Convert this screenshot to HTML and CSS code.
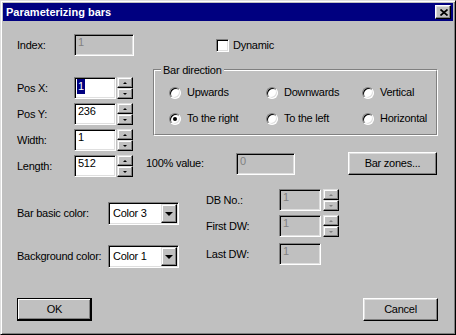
FILE: index.html
```html
<!DOCTYPE html>
<html lang="en">
<head>
	<meta charset="UTF-8">
	<title>Parameterizing bars</title>
	<link rel="stylesheet" href="styles.css">
</head>
<body>
	<div class="dlg">
		<div class="titlebar">
			<span class="title">Parameterizing bars</span>
			<span class="closebtn">
				<svg width="8" height="7" viewBox="0 0 8 7"><path d="M0.5 0.5 L7.5 6.5 M7.5 0.5 L0.5 6.5" stroke="#000" stroke-width="1.7" fill="none"/></svg>
			</span>
		</div>
		<div class="client">
			<!-- index / dynamic -->
			<div class="row_index">
				<span class="lbl w57">Index:</span>
				<div class="edit dis w60">1</div>
				<span class="check"></span>
				<span class="check_txt">Dynamic</span>
			</div>

			<div class="main">
				<div class="pos_col">
					<div class="spinrow">
						<span class="lbl w57">Pos X:</span>
						<div class="edit w42"><span class="sel">1</span></div>
						<div class="spin"><b class="up"></b><b class="dn"></b></div>
					</div>
					<div class="spinrow">
						<span class="lbl w57">Pos Y:</span>
						<div class="edit w42">236</div>
						<div class="spin"><b class="up"></b><b class="dn"></b></div>
					</div>
					<div class="spinrow">
						<span class="lbl w57">Width:</span>
						<div class="edit w42">1</div>
						<div class="spin"><b class="up"></b><b class="dn"></b></div>
					</div>
					<div class="spinrow">
						<span class="lbl w57">Length:</span>
						<div class="edit w42">512</div>
						<div class="spin"><b class="up"></b><b class="dn"></b></div>
					</div>
				</div>

				<div class="right_col">
					<div class="group">
						<div class="group_in">
							<span class="legend">Bar direction</span>
							<div class="radios">
								<span class="radio"><i></i>Upwards</span>
								<span class="radio"><i></i>Downwards</span>
								<span class="radio"><i></i>Vertical</span>
								<span class="radio"><i class="on"></i>To the right</span>
								<span class="radio"><i></i>To the left</span>
								<span class="radio"><i></i>Horizontal</span>
							</div>
						</div>
					</div>
					<div class="val_row">
						<span class="lbl w90">100% value:</span>
						<div class="edit dis w59">0</div>
						<div class="btn zones">Bar zones...</div>
					</div>
				</div>
			</div>

			<div class="lower">
				<div class="color_col">
					<div class="comborow">
						<span class="lbl w91">Bar basic color:</span>
						<div class="combo">Color 3<span class="drop"><b></b></span></div>
					</div>
					<div class="comborow second">
						<span class="lbl w91">Background color:</span>
						<div class="combo">Color 1<span class="drop"><b></b></span></div>
					</div>
				</div>
				<div class="db_col">
					<div class="spinrow">
						<span class="lbl w73">DB No.:</span>
						<div class="edit dis w42">1</div>
						<div class="spin dis"><b class="up"></b><b class="dn"></b></div>
					</div>
					<div class="spinrow">
						<span class="lbl w73">First DW:</span>
						<div class="edit dis w42">1</div>
						<div class="spin dis"><b class="up"></b><b class="dn"></b></div>
					</div>
					<div class="spinrow last">
						<span class="lbl w73">Last DW:</span>
						<div class="edit dis w42">1</div>
					</div>
				</div>
			</div>

			<div class="btnrow">
				<div class="btn def">OK</div>
				<div class="btn">Cancel</div>
			</div>
		</div>
	</div>
</body>
</html>
```

FILE: styles.css
```css
*{
	margin: 0;
	padding: 0;
	box-sizing: border-box;
}
body{
	background: #c0c0c0;
	font-family: "Liberation Sans", Arial, sans-serif;
	font-size: 11px;
	line-height: 13px;
	letter-spacing: -0.25px;
	color: #000;
}
.dlg{
	width: 456px;
	height: 335px;
	background: #c0c0c0;
	border: 1px solid;
	border-color: #dfdfdf #000 #000 #dfdfdf;
	box-shadow: inset 1px 1px 0 #fff, inset -1px -1px 0 #808080;
	padding: 2px;
}
.titlebar{
	height: 18px;
	background: #000080;
	display: flex;
	align-items: center;
	justify-content: space-between;
	padding: 0 2px 0 3px;
}
.title{
	color: #fff;
	font-weight: bold;
	line-height: 18px;
	letter-spacing: 0;
}
.closebtn{
	width: 16px;
	height: 14px;
	background: #c0c0c0;
	border: 1px solid;
	border-color: #fff #000 #000 #fff;
	box-shadow: inset -1px -1px 0 #808080, inset 1px 1px 0 #dfdfdf;
	display: flex;
	align-items: center;
	justify-content: center;
	padding-left: 1px;
}
.closebtn svg{
	display: block;
}
.client{
	padding: 13px 15px 0 14px;
}

/* labels */
.lbl{
	flex: none;
	white-space: nowrap;
}
.w57{ width: 57px; }
.w90{ width: 90px; }
.w91{ width: 91px; }
.w73{ width: 73px; }

/* sunken edit box */
.edit{
	flex: none;
	height: 22px;
	background: #fff;
	border: 1px solid;
	border-color: #808080 #fff #fff #808080;
	box-shadow: inset 1px 1px 0 #000, inset -1px -1px 0 #dfdfdf;
	padding: 1px 0 0 3px;
	white-space: nowrap;
}
.edit.dis{
	background: #c0c0c0;
	color: #808080;
}
.w60{ width: 60px; }
.w59{ width: 59px; }
.w42{ width: 42px; }
.sel{
	background: #000080;
	color: #fff;
	display: inline-block;
	padding: 0 1px;
	margin-left: -1px;
	height: 15px;
	line-height: 14px;
}

/* spin buttons */
.spin{
	flex: none;
	width: 16px;
	height: 22px;
	margin-left: 1px;
	display: flex;
	flex-direction: column;
}
.spin b{
	display: flex;
	align-items: center;
	justify-content: center;
	height: 11px;
	border: 1px solid;
	border-color: #dfdfdf #000 #000 #dfdfdf;
	box-shadow: inset -1px -1px 0 #808080, inset 1px 1px 0 #fff;
}
.spin b:after{
	content: "";
	border-left: 2px solid transparent;
	border-right: 2px solid transparent;
}
.spin b.up:after{
	border-bottom: 2px solid #000;
}
.spin b.dn:after{
	border-top: 2px solid #000;
}
.spin.dis b.up:after{
	border-bottom-color: #808080;
}
.spin.dis b.dn:after{
	border-top-color: #808080;
}

/* index row */
.row_index{
	display: flex;
	align-items: center;
	height: 22px;
}
.check{
	flex: none;
	width: 13px;
	height: 13px;
	margin-left: 82px;
	background: #fff;
	border: 1px solid;
	border-color: #808080 #fff #fff #808080;
	box-shadow: inset 1px 1px 0 #000, inset -1px -1px 0 #dfdfdf;
}
.check_txt{
	margin-left: 4px;
}

/* main part */
.main{
	display: flex;
	margin-top: 8px;
}
.pos_col{
	width: 116px;
	padding-top: 13px;
	display: flex;
	flex-direction: column;
	gap: 4px;
}
.spinrow{
	display: flex;
	align-items: center;
	height: 22px;
}
.right_col{
	margin-left: 13px;
}
.group{
	width: 285px;
	margin: 5px 0 0 7px;
	border: 1px solid;
	border-color: #808080 #fff #fff #808080;
}
.group_in{
	border: 1px solid;
	border-color: #fff #808080 #808080 #fff;
	padding: 0 0 9px 14px;
}
.legend{
	display: block;
	width: max-content;
	margin: -7px 0 0 -8px;
	padding: 0 2px;
	background: #c0c0c0;
}
.radios{
	display: grid;
	grid-template-columns: 97px 96px 1fr;
	row-gap: 13px;
	margin-top: 9px;
}
.radio{
	display: flex;
	align-items: center;
	height: 13px;
	white-space: nowrap;
}
.radio i{
	flex: none;
	width: 12px;
	height: 12px;
	margin-right: 6px;
	border-radius: 50%;
	background: #fff;
	border: 1px solid;
	border-color: #808080 #fff #fff #808080;
	box-shadow: inset 1px 1px 0 #000, inset -1px -1px 0 #dfdfdf;
	display: flex;
	align-items: center;
	justify-content: center;
}
.radio i.on:after{
	content: "";
	width: 4px;
	height: 4px;
	border-radius: 50%;
	background: #000;
}
.val_row{
	display: flex;
	align-items: center;
	margin-top: 16px;
	height: 23px;
}

/* buttons */
.btn{
	flex: none;
	width: 75px;
	height: 23px;
	line-height: 21px;
	text-align: center;
	border: 1px solid;
	border-color: #fff #000 #000 #fff;
	box-shadow: inset -1px -1px 0 #808080, inset 1px 1px 0 #dfdfdf;
}
.btn.def{
	border-color: #000;
	box-shadow: inset -1px -1px 0 #000, inset 1px 1px 0 #fff, inset -2px -2px 0 #808080;
}
.btn.zones{
	width: 89px;
	margin-left: 53px;
}

/* lower part */
.lower{
	display: flex;
	margin-top: 12px;
}
.color_col{
	width: 162px;
	padding-top: 13px;
}
.comborow{
	display: flex;
	align-items: center;
	height: 23px;
}
.comborow.second{
	margin-top: 20px;
}
.combo{
	flex: none;
	width: 71px;
	height: 23px;
	background: #fff;
	border: 1px solid;
	border-color: #808080 #fff #fff #808080;
	box-shadow: inset 1px 1px 0 #000, inset -1px -1px 0 #dfdfdf;
	padding: 1px 1px 1px 4px;
	display: flex;
	align-items: center;
	justify-content: space-between;
}
.drop{
	width: 16px;
	height: 19px;
	border: 1px solid;
	border-color: #dfdfdf #000 #000 #dfdfdf;
	box-shadow: inset -1px -1px 0 #808080, inset 1px 1px 0 #fff;
	background: #c0c0c0;
	display: flex;
	align-items: center;
	justify-content: center;
}
.drop b{
	border-left: 4px solid transparent;
	border-right: 4px solid transparent;
	border-top: 4px solid #000;
}
.db_col{
	margin-left: 27px;
}
.db_col .spinrow + .spinrow{
	margin-top: 4px;
}
.db_col .spinrow.last{
	margin-top: 6px;
}
.db_col .spin{
	margin-left: 2px;
}
.btnrow{
	display: flex;
	justify-content: space-between;
	margin-top: 30px;
}
```
